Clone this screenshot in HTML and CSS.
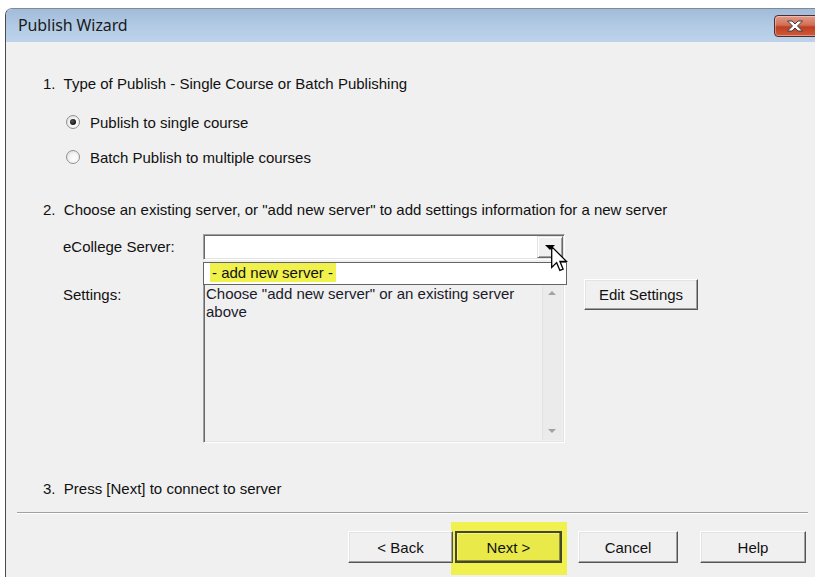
FILE: index.html
```html
<!DOCTYPE html>
<html lang="en">
<head>
<meta charset="utf-8">
<title>Publish Wizard</title>
<link rel="stylesheet" href="styles.css">
</head>
<body>
<div class="window">
  <div class="titlebar">
    <span class="title">Publish Wizard</span>
    <button class="close" type="button" aria-label="Close">
      <svg width="18" height="12" viewBox="0 0 18 12" aria-hidden="true">
        <path d="M1.5 1 H6 L9 4 L12 1 H16.5 L11.5 6 L16.5 11 H12 L9 8 L6 11 H1.5 L6.5 6 Z" fill="#fff" stroke="#3b3b3b" stroke-width="1" stroke-linejoin="round"/>
      </svg>
    </button>
  </div>

  <div class="content">
    <p class="step">1.&nbsp; Type of Publish - Single Course or Batch Publishing</p>

    <label class="radio-row first"><span class="radio checked"></span>Publish to single course</label>
    <label class="radio-row"><span class="radio"></span>Batch Publish to multiple courses</label>

    <p class="step step2">2.&nbsp; Choose an existing server, or "add new server" to add settings information for a new server</p>

    <div class="field server">
      <span class="field-label">eCollege Server:</span>
      <div class="combo">
        <span class="combo-btn"><span class="combo-arrow"></span></span>
        <ul class="dropdown">
          <li><span class="marked">- add new server -</span></li>
        </ul>
        <svg class="cursor" width="17" height="26" viewBox="0 0 13 20" aria-hidden="true">
          <path d="M0.5 0.5 V16.5 L4.3 12.8 L6.8 18.8 L9.3 17.8 L6.8 11.8 L11.8 11.8 Z" fill="#fff" stroke="#000" stroke-width="1" stroke-linejoin="miter"/>
        </svg>
      </div>
    </div>

    <div class="field settings">
      <span class="field-label settings-label">Settings:</span>
      <div class="memo">
        <div class="memo-text">Choose "add new server" or an existing server above</div>
        <div class="vscroll">
          <span class="scroll-up"></span>
          <span class="scroll-down"></span>
        </div>
      </div>
      <button class="btn edit" type="button">Edit Settings</button>
    </div>

    <p class="step step3">3.&nbsp; Press [Next] to connect to server</p>
  </div>

  <div class="footer">
    <div class="sep"></div>
    <div class="buttons">
      <button class="btn back" type="button">&lt; Back</button>
      <button class="btn next" type="button">Next &gt;</button>
      <button class="btn cancel" type="button">Cancel</button>
      <button class="btn help" type="button">Help</button>
    </div>
  </div>
</div>
</body>
</html>
```

FILE: styles.css
```css
* {
  box-sizing: border-box;
}

html, body {
  margin: 0;
  padding: 0;
  background: #fff;
  height: 100%;
  overflow: hidden;
}

body {
  font-family: "Liberation Sans", Arial, sans-serif;
  font-size: 15px;
  color: #111;
}

/* dialog frame */
.window {
  margin: 8px 0 0 5px;
  height: calc(100% - 8px);
  background: #f0f0f0;
  border-left: 1px solid #4a4a4a;
  border-top: 1px solid #7f8a99;
  border-top-left-radius: 7px;
  overflow: hidden;
}

.titlebar {
  height: 33px;
  display: flex;
  align-items: center;
  justify-content: space-between;
  padding-left: 12px;
  background: linear-gradient(#a1bbd9, #b3cbe5 55%, #bdd3ea);
  border-top-left-radius: 6px;
}

.title {
  font-family: "Noto Sans", "Open Sans", sans-serif;
  font-size: 16px;
  color: #1b1b1b;
  letter-spacing: -0.1px;
  margin-top: -1px;
}

.close {
  width: 46px;
  height: 22px;
  margin-right: -5px;
  padding: 0;
  border: 1px solid #4e2e2e;
  border-radius: 4px;
  background: linear-gradient(#e29a88, #d26f57 45%, #bf3e22 55%, #cf5a3b);
  box-shadow: inset 0 0 0 1px rgba(255, 255, 255, 0.35);
  display: flex;
  align-items: center;
  justify-content: center;
}

.close svg {
  display: block;
  margin-left: -5px;
}

/* wizard body */
.content {
  padding: 33px 0 0 37px;
}

.step {
  margin: 0;
  line-height: 18px;
}

.radio-row {
  display: flex;
  align-items: center;
  height: 18px;
  margin: 17px 0 0 23px;
}

.radio-row.first {
  margin-top: 20px;
}

.radio {
  width: 14px;
  height: 14px;
  border-radius: 50%;
  border: 1px solid #8f9093;
  background: radial-gradient(circle at 60% 60%, #ffffff 0%, #f4f4f4 45%, #d5d5d5 100%);
  margin-right: 10px;
  position: relative;
  flex: none;
}

.radio.checked::after {
  content: "";
  position: absolute;
  left: 3px;
  top: 3px;
  width: 6px;
  height: 6px;
  border-radius: 50%;
  background: radial-gradient(circle at 40% 40%, #555 0%, #111 70%);
}

.step2 {
  margin-top: 35px;
}

.field {
  display: flex;
  margin-left: 20px;
}

.field-label {
  width: 140px;
  flex: none;
  line-height: 18px;
}

.server {
  margin-top: 15px;
  align-items: center;
}

/* combo box with its open list */
.combo {
  position: relative;
  width: 362px;
  height: 26px;
  background: #fff;
  border: 1px solid;
  border-color: #a0a0a0 #fff #fff #a0a0a0;
  box-shadow: inset 1px 1px 0 #696969, inset -1px -1px 0 #e3e3e3;
}

.combo-btn {
  position: absolute;
  right: 1px;
  top: 1px;
  width: 26px;
  height: 22px;
  background: #f0f0f0;
  border: 1px solid;
  border-color: #e3e3e3 #696969 #696969 #e3e3e3;
  box-shadow: inset 1px 1px 0 #fff, inset -1px -1px 0 #a0a0a0;
  display: flex;
  align-items: center;
  justify-content: center;
}

.combo-arrow {
  width: 0;
  height: 0;
  border-top: 5px solid #000;
  border-left: 5px solid transparent;
  border-right: 5px solid transparent;
  margin-top: 1px;
}

.dropdown {
  position: absolute;
  left: -1px;
  top: 27px;
  width: 364px;
  height: 23px;
  margin: 0;
  padding: 0 0 0 6px;
  list-style: none;
  background: #fff;
  border: 1px solid #646464;
  z-index: 2;
}

.dropdown li {
  line-height: 20px;
}

.marked {
  display: inline-block;
  background: #f1f14e;
  padding: 0 3px 0 2px;
  line-height: 19px;
}

.cursor {
  position: absolute;
  left: 347px;
  top: 11px;
  z-index: 3;
}

.settings {
  margin-top: 19px;
  align-items: flex-start;
}

.settings-label {
  padding-top: 7px;
}

.memo {
  position: relative;
  width: 362px;
  height: 164px;
  border: 1px solid;
  border-color: #a0a0a0 #fff #fff #a0a0a0;
  box-shadow: inset 1px 1px 0 #696969, inset -1px -1px 0 #e3e3e3;
  background: #f0f0f0;
  display: flex;
}

.memo-text {
  flex: 1;
  padding: 5px 8px 0 2px;
  line-height: 18px;
  color: #1a1a2a;
}

.vscroll {
  width: 20px;
  margin: 2px 2px 2px 0;
  background: #ebebeb;
  border-left: 1px solid #e2e2e2;
  position: relative;
}

.scroll-up,
.scroll-down {
  position: absolute;
  left: 5px;
  width: 0;
  height: 0;
  border-left: 4px solid transparent;
  border-right: 4px solid transparent;
}

.scroll-up {
  top: 9px;
  border-bottom: 4px solid #a2a2a2;
}

.scroll-down {
  bottom: 7px;
  border-top: 4px solid #a2a2a2;
}

/* push buttons */
.btn {
  font-family: "Liberation Sans", Arial, sans-serif;
  font-size: 15px;
  color: #111;
  height: 32px;
  padding: 0;
  background: #f0f0f0;
  border: 1px solid;
  border-color: #fff #555 #555 #fff;
  box-shadow: inset -1px -1px 0 #a0a0a0, inset 1px 1px 0 #e3e3e3;
}

.edit {
  width: 114px;
  height: 31px;
  margin: 0 0 0 19px;
}

.step3 {
  margin-top: 37px;
}

.footer {
  padding-top: 14px;
}

.sep {
  margin: 0 7px 0 11px;
  border-top: 1px solid #a0a0a0;
  border-bottom: 1px solid #fff;
}

.buttons {
  display: flex;
  justify-content: flex-end;
  margin-top: 17px;
  padding-right: 9px;
  position: relative;
  z-index: 0;
}

.back {
  width: 105px;
}

.next {
  width: 107px;
  margin-left: 2px;
  position: relative;
  background: #e9e94a;
  border: 2px solid #46462c;
  box-shadow: inset -1px -1px 0 #8c8c3c, inset 1px 1px 0 #f5f57a;
}

/* marker highlight around the default button */
.next::before {
  content: "";
  position: absolute;
  left: -6px;
  right: -7px;
  top: -11px;
  bottom: -14px;
  background: #f0f04f;
  z-index: -1;
}

.cancel {
  width: 100px;
  margin-left: 16px;
}

.help {
  width: 106px;
  margin-left: 22px;
}
```
